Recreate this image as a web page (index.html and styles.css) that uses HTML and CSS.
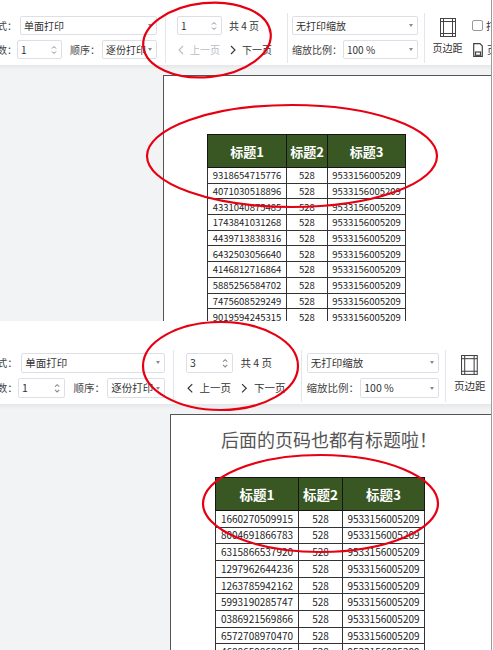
FILE: index.html
```html
<!DOCTYPE html>
<html lang="zh-CN">
<head>
<meta charset="utf-8">
<title>打印预览</title>
<link rel="stylesheet" href="styles.css">
</head>
<body>

<section class="shot shot-a">
  <div class="toolbar">
    <div class="group g-mode">
      <div class="row">
        <span class="lbl lbl-edge">式：</span>
        <div class="field w-mode"><span>单面打印</span><i class="caret"></i></div>
      </div>
      <div class="row">
        <span class="lbl lbl-edge2">数：</span>
        <div class="field w-copies"><span>1</span>
          <svg class="spin" viewBox="0 0 6 12"><polyline points="1,4.5 3,2.5 5,4.5"/><polyline points="1,7.5 3,9.5 5,7.5"/></svg>
        </div>
        <span class="lbl lbl-order">顺序：</span>
        <div class="field w-order"><span>逐份打印</span><i class="caret"></i></div>
      </div>
    </div>
    <div class="group g-page">
      <div class="row">
        <div class="field w-pageno"><span>1</span>
          <svg class="spin" viewBox="0 0 6 12"><polyline points="1,4.5 3,2.5 5,4.5"/><polyline points="1,7.5 3,9.5 5,7.5"/></svg>
        </div>
        <span class="total">共 4 页</span>
      </div>
      <div class="row">
        <span class="nav nav-prev is-disabled"><svg viewBox="0 0 6 10"><polyline points="5,1 1,5 5,9"/></svg>上一页</span>
        <span class="nav nav-next"><svg viewBox="0 0 6 10"><polyline points="1,1 5,5 1,9"/></svg>下一页</span>
      </div>
    </div>
    <div class="group g-scale">
      <div class="row">
        <div class="field w-fit"><span>无打印缩放</span><i class="caret"></i></div>
      </div>
      <div class="row">
        <span class="lbl lbl-ratio">缩放比例：</span>
        <div class="field w-ratio"><span>100 %</span><i class="caret"></i></div>
      </div>
    </div>
    <div class="group g-margin">
      <div class="tool">
        <svg viewBox="0 0 16 19"><rect x="0.5" y="0.5" width="15" height="18"/><line x1="3.5" y1="0.5" x2="3.5" y2="18.5"/><line x1="12.5" y1="0.5" x2="12.5" y2="18.5"/><line x1="0.5" y1="3.5" x2="15.5" y2="3.5"/><line x1="0.5" y1="15.5" x2="15.5" y2="15.5"/></svg>
        <span>页边距</span>
      </div>
    </div>
    <div class="group g-extra">
      <div class="row"><span class="check"></span><span>打印网格线</span></div>
      <div class="row"><svg class="doc" viewBox="0 0 10 14"><path d="M0.7 0.7h6.3l2.3 2.3v10.3H0.7z"/><rect x="2.5" y="9" width="5" height="3.3"/></svg><span>页眉页脚</span></div>
    </div>
  </div>
  <div class="band"></div>
  <div class="page">
    <table class="sheet sheet-a">
      <colgroup><col class="c1"><col class="c2"><col class="c3"></colgroup>
      <thead><tr><th>标题1</th><th>标题2</th><th>标题3</th></tr></thead>
      <tbody>
        <tr><td>9318654715776</td><td>528</td><td>9533156005209</td></tr>
        <tr><td>4071030518896</td><td>528</td><td>9533156005209</td></tr>
        <tr><td>4331040875485</td><td>528</td><td>9533156005209</td></tr>
        <tr><td>1743841031268</td><td>528</td><td>9533156005209</td></tr>
        <tr><td>4439713838316</td><td>528</td><td>9533156005209</td></tr>
        <tr><td>6432503056640</td><td>528</td><td>9533156005209</td></tr>
        <tr><td>4146812716864</td><td>528</td><td>9533156005209</td></tr>
        <tr><td>5885256584702</td><td>528</td><td>9533156005209</td></tr>
        <tr><td>7475608529249</td><td>528</td><td>9533156005209</td></tr>
        <tr><td>9019594245315</td><td>528</td><td>9533156005209</td></tr>
      </tbody>
    </table>
  </div>
  <svg class="marks" viewBox="0 0 491 321">
    <ellipse cx="207" cy="40" rx="64" ry="37" transform="rotate(-6 207 40)"/>
    <ellipse cx="292" cy="156" rx="145" ry="51"/>
  </svg>
</section>

<section class="shot shot-b">
  <div class="toolbar">
    <div class="group g-mode">
      <div class="row">
        <span class="lbl lbl-edge">式：</span>
        <div class="field w-mode"><span>单面打印</span><i class="caret"></i></div>
      </div>
      <div class="row">
        <span class="lbl lbl-edge2">数：</span>
        <div class="field w-copies"><span>1</span>
          <svg class="spin" viewBox="0 0 6 12"><polyline points="1,4.5 3,2.5 5,4.5"/><polyline points="1,7.5 3,9.5 5,7.5"/></svg>
        </div>
        <span class="lbl lbl-order">顺序：</span>
        <div class="field w-order"><span>逐份打印</span><i class="caret"></i></div>
      </div>
    </div>
    <div class="group g-page">
      <div class="row">
        <div class="field w-pageno"><span>3</span>
          <svg class="spin" viewBox="0 0 6 12"><polyline points="1,4.5 3,2.5 5,4.5"/><polyline points="1,7.5 3,9.5 5,7.5"/></svg>
        </div>
        <span class="total">共 4 页</span>
      </div>
      <div class="row">
        <span class="nav nav-prev"><svg viewBox="0 0 6 10"><polyline points="5,1 1,5 5,9"/></svg>上一页</span>
        <span class="nav nav-next"><svg viewBox="0 0 6 10"><polyline points="1,1 5,5 1,9"/></svg>下一页</span>
      </div>
    </div>
    <div class="group g-scale">
      <div class="row">
        <div class="field w-fit"><span>无打印缩放</span><i class="caret"></i></div>
      </div>
      <div class="row">
        <span class="lbl lbl-ratio">缩放比例：</span>
        <div class="field w-ratio"><span>100 %</span><i class="caret"></i></div>
      </div>
    </div>
    <div class="group g-margin">
      <div class="tool">
        <svg viewBox="0 0 16 19"><rect x="0.5" y="0.5" width="15" height="18"/><line x1="3.5" y1="0.5" x2="3.5" y2="18.5"/><line x1="12.5" y1="0.5" x2="12.5" y2="18.5"/><line x1="0.5" y1="3.5" x2="15.5" y2="3.5"/><line x1="0.5" y1="15.5" x2="15.5" y2="15.5"/></svg>
        <span>页边距</span>
      </div>
    </div>
  </div>
  <div class="band"></div>
  <div class="page">
    <p class="note">后面的页码也都有标题啦！</p>
    <table class="sheet sheet-b">
      <colgroup><col class="c1"><col class="c2"><col class="c3"></colgroup>
      <thead><tr><th>标题1</th><th>标题2</th><th>标题3</th></tr></thead>
      <tbody>
        <tr><td>1660270509915</td><td>528</td><td>9533156005209</td></tr>
        <tr><td>8004691866783</td><td>528</td><td>9533156005209</td></tr>
        <tr><td>6315866537920</td><td>528</td><td>9533156005209</td></tr>
        <tr><td>1297962644236</td><td>528</td><td>9533156005209</td></tr>
        <tr><td>1263785942162</td><td>528</td><td>9533156005209</td></tr>
        <tr><td>5993190285747</td><td>528</td><td>9533156005209</td></tr>
        <tr><td>0386921569866</td><td>528</td><td>9533156005209</td></tr>
        <tr><td>6572708970470</td><td>528</td><td>9533156005209</td></tr>
        <tr><td>4688659868865</td><td>528</td><td>9533156005209</td></tr>
      </tbody>
    </table>
  </div>
  <svg class="marks" viewBox="0 0 491 329">
    <ellipse cx="220.5" cy="45" rx="77.5" ry="44"/>
    <ellipse cx="320.5" cy="182.5" rx="117.5" ry="48.5"/>
  </svg>
</section>

</body>
</html>
```

FILE: styles.css
```css
* { box-sizing: border-box; }

body {
  margin: 0;
  background: #fff;
  font-family: "Noto Sans CJK SC", "Noto Sans", sans-serif;
  color: #333;
}

.shot {
  position: relative;
  width: 492px;
  border-right: 1px solid #9b9b9b;
  overflow: hidden;
  background: #f2f3f5;
}
.shot-a { height: 321px; }
.shot-b { height: 329px; }

/* ---------- toolbar ---------- */
.toolbar {
  display: flex;
  height: 65px;
  padding: 13px 0 2px;
  background: #fff;
  font-size: 10px;
  line-height: 1;
  white-space: nowrap;
}
.shot-b .toolbar {
  zoom: 1.05;
  height: 79px;
  padding-top: 27.5px;
}

.group {
  display: flex;
  flex-direction: column;
  gap: 5px;
  padding-top: 3px;
  border-right: 1px solid #e4e6ea;
  flex: none;
}
.row {
  display: flex;
  align-items: center;
  height: 19px;
}

.g-mode { width: 166px; }
.g-page { width: 122px; padding-left: 11px; }
.g-scale { width: 137px; padding-left: 4px; }
.g-margin { width: 46px; padding-left: 7px; border-right: 0; }
.g-extra { padding-left: 1px; border-right: 0; }

.lbl { color: #444; flex: none; }
.lbl-edge { margin-left: -3px; width: 23px; }
.lbl-edge2 { margin-left: -3px; width: 20px; }
.lbl-order { margin-left: 8px; width: 32px; }
.lbl-ratio { width: 51px; }

.field {
  display: flex;
  align-items: center;
  justify-content: space-between;
  flex: none;
  height: 19px;
  padding: 0 4px 0 3px;
  border: 1px solid #dcdfe6;
  border-radius: 2px;
  background: #fff;
  color: #333;
}
.w-mode { width: 137px; }
.w-copies { width: 45px; }
.w-order { width: 55px; }
.w-pageno { width: 45px; }
.w-fit { width: 126px; }
.w-ratio { width: 75px; }

.caret {
  width: 0;
  height: 0;
  border-left: 2.5px solid transparent;
  border-right: 2.5px solid transparent;
  border-top: 3px solid #8a8a8a;
}
.spin {
  width: 6px;
  height: 12px;
  fill: none;
  stroke: #888;
  stroke-width: 1;
}

.total { margin-left: 7px; }

.nav {
  display: flex;
  align-items: center;
  gap: 6px;
}
.nav svg {
  width: 6px;
  height: 10px;
  fill: none;
  stroke: currentColor;
  stroke-width: 1.1;
}
.nav-prev { margin-left: 1px; }
.nav-next { margin-left: 10px; }
.is-disabled { color: #b8bcc4; }

.tool {
  display: flex;
  flex-direction: column;
  align-items: center;
  gap: 6px;
  width: 31px;
  padding-top: 2px;
}
.tool svg {
  width: 16px;
  height: 19px;
  fill: none;
  stroke: #444;
  stroke-width: 1;
}

.check {
  width: 11px;
  height: 11px;
  margin-right: 3px;
  border: 1px solid #999;
  border-radius: 2px;
  background: #fff;
  flex: none;
}
.doc {
  width: 10px;
  height: 14px;
  margin: 0 4px 0 1px;
  fill: none;
  stroke: #444;
  stroke-width: 1.2;
  flex: none;
}

.band {
  height: 5px;
  background: linear-gradient(#e6e7e9, #f2f3f5);
}
.shot-b .band { height: 6px; }

/* ---------- page ---------- */
.page {
  height: 420px;
  margin: 5px 0 0 163px;
  padding: 58px 0 0 43px;
  border-top: 1px solid #555;
  border-left: 1px solid #555;
  background: #fff;
}
.shot-b .page {
  margin: 4px 0 0 170px;
  padding: 12px 0 0 44px;
}

.note {
  margin: 0 0 26px 6px;
  font-size: 18px;
  line-height: 24px;
  color: #555;
  font-weight: 400;
}

.sheet {
  border-collapse: collapse;
  table-layout: fixed;
  text-align: center;
  color: #222;
}
.sheet th {
  padding: 0;
  background: #385723;
  color: #fff;
  font-weight: 700;
  border: 1px solid #151515;
}
.sheet td {
  padding: 0;
  border: 1px solid #333;
  line-height: 12px;
}

.sheet-a { width: 198px; font-size: 9.5px; }
.sheet-a .c1 { width: 79px; }
.sheet-a .c2 { width: 41px; }
.sheet-a .c3 { width: 78px; }
.sheet-a th { height: 33px; font-size: 13px; }
.sheet-a td { height: 15.7px; }

.sheet-b { width: 209px; font-size: 10px; }
.sheet-b .c1 { width: 83px; }
.sheet-b .c2 { width: 44px; }
.sheet-b .c3 { width: 82px; }
.sheet-b th { height: 33px; font-size: 13.5px; }
.sheet-b td { height: 16.7px; }

/* ---------- annotations ---------- */
.marks {
  position: absolute;
  left: 0;
  top: 0;
  width: 491px;
  height: 100%;
  fill: none;
  stroke: #e60012;
  stroke-width: 2.2;
  pointer-events: none;
}
```
